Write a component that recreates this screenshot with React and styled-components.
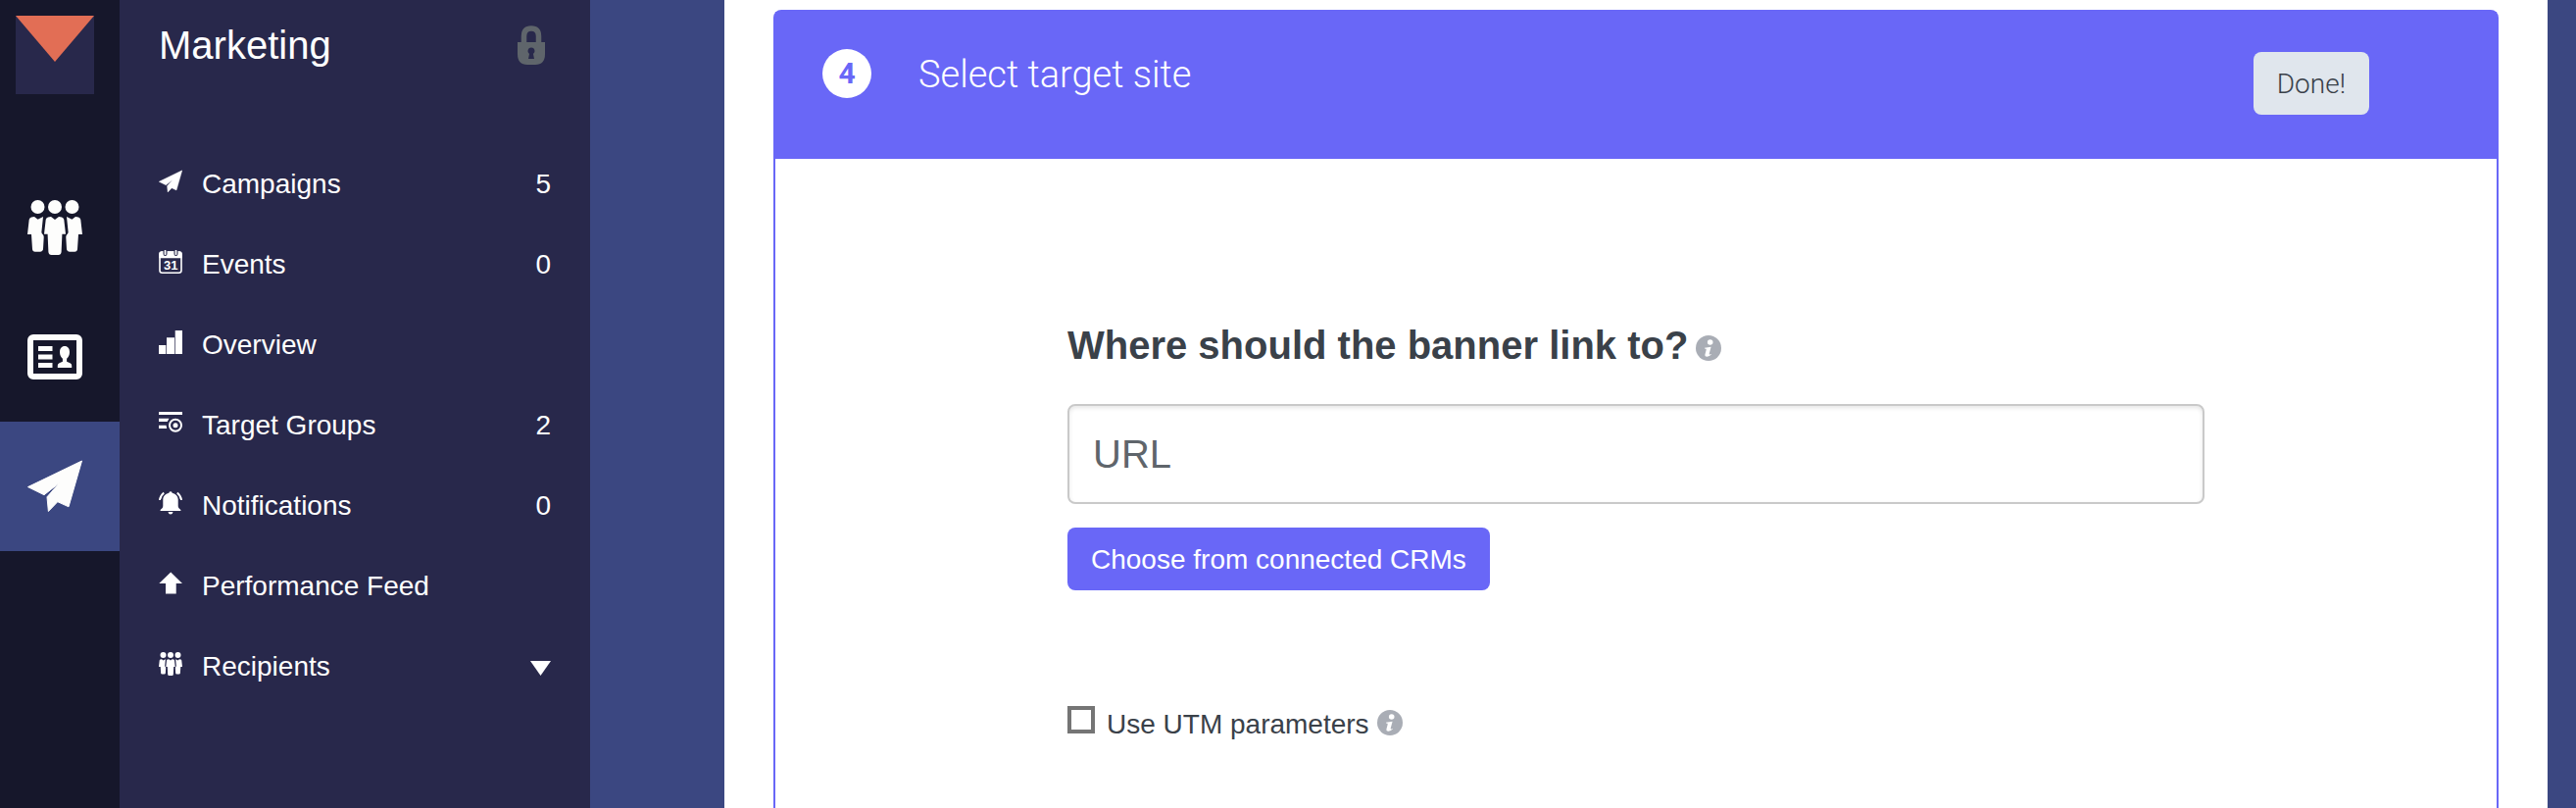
import React, { useState } from 'react';
import styled, { createGlobalStyle, css } from 'styled-components';

const colors = {
  rail: '#16172b',
  sidebar: '#28284b',
  accent: '#3b4781',
  primary: '#6967f7',
  coral: '#e26e55',
  text: '#3a4149',
  muted: '#5f656b',
  info: '#a9adb5',
  line: '#c9c9c9',
};

const GlobalStyle = createGlobalStyle`
  *, *::before, *::after { box-sizing: border-box; }
  body {
    margin: 0;
    background: ${colors.accent};
    font-family: "Liberation Sans", Arial, Helvetica, sans-serif;
    font-size: 28px;
    line-height: 32px;
    color: ${colors.text};
  }
`;

const Page = styled.div`
  display: flex;
  min-height: 100vh;
`;

const Rail = styled.nav`
  flex: 0 0 122px;
  background: ${colors.rail};
`;

const LogoLink = styled.a`
  display: block;
  padding: 16px 16px 70px;

  svg { display: block; }
`;

const RailLink = styled.a`
  display: flex;
  align-items: center;
  height: 132px;
  padding-left: 28px;
  color: #fdfdfc;
  background: ${({ $active }) => ($active ? colors.accent : 'transparent')};
`;

const Sidebar = styled.aside`
  flex: 0 0 480px;
  background: ${colors.sidebar};
  color: #fff;
`;

const SidebarHeader = styled.header`
  display: flex;
  align-items: center;
  justify-content: space-between;
  padding: 23px 46px 78px 40px;
`;

const SidebarTitle = styled.h1`
  margin: 0;
  font-size: 40px;
  font-weight: 400;
  line-height: 46px;
`;

const Menu = styled.ul`
  margin: 0;
  padding: 0;
  list-style: none;
`;

const menuRow = css`
  display: flex;
  align-items: baseline;
  gap: 20px;
  width: 100%;
  padding: 25px 40px;
  border: 0;
  background: none;
  color: inherit;
  font: inherit;
  text-align: left;
  text-decoration: none;
  cursor: pointer;
`;

const MenuLink = styled.a`${menuRow}`;
const MenuToggle = styled.button`${menuRow}`;
const MenuLabel = styled.span`flex: 1;`;

const Main = styled.main`
  display: flex;
  flex: 1;
  min-width: 0;
  margin: 0 29px 0 137px;
  padding: 10px 50px 0;
  background: #fff;
`;

const Card = styled.section`
  flex: 1;
  min-width: 0;
  border: 2px solid ${colors.primary};
  border-bottom: 0;
  border-radius: 8px 8px 0 0;
`;

const CardHeader = styled.header`
  display: flex;
  align-items: flex-start;
  justify-content: space-between;
  padding: 38px 130px 45px 48px;
  background: ${colors.primary};
  font-family: Roboto, "Liberation Sans", sans-serif;
`;

const StepHeading = styled.div`
  display: flex;
  align-items: flex-start;
  gap: 48px;
`;

const StepBadge = styled.span`
  display: grid;
  place-items: center;
  width: 50px;
  height: 50px;
  border-radius: 50%;
  background: #fff;
  color: ${colors.primary};
  font-size: 30px;
  font-weight: 700;
`;

const StepTitle = styled.h2`
  margin: 0;
  color: #fff;
  font-size: 38px;
  font-weight: 350;
  line-height: 52px;
`;

const Button = styled.button`
  height: 64px;
  padding: 2px 24px 0;
  border: 0;
  border-radius: 8px;
  background: ${colors.primary};
  color: #fff;
  font: inherit;
  cursor: pointer;
`;

const DoneButton = styled(Button)`
  margin-top: 3px;
  background: #e0e6ed;
  color: ${colors.text};
  font-weight: 300;
`;

const CardBody = styled.form`
  display: flex;
  flex-direction: column;
  align-items: flex-start;
  max-width: 1160px;
  margin: 0 auto;
  padding: 167px 0 64px;
`;

const LabelLine = styled.div`
  display: flex;
  align-items: baseline;
  gap: 8px;
`;

const Question = styled.label`
  font-size: 40px;
  font-weight: 700;
  line-height: 46px;
`;

const UrlInput = styled.input`
  width: 100%;
  height: 102px;
  margin: 37px 0 24px;
  padding: 0 24px;
  border: 2px solid ${colors.line};
  border-radius: 8px;
  background: #fff;
  box-shadow: inset 0 2px 4px rgba(0, 0, 0, 0.1);
  color: ${colors.text};
  font: inherit;
  font-size: 40px;

  &::placeholder { color: ${colors.muted}; opacity: 1; }
`;

const CheckLine = styled(LabelLine)`
  margin-top: 118px;
`;

const CheckLabel = styled.label`
  display: flex;
  align-items: baseline;
  gap: 12px;
`;

const Checkbox = styled.input`
  appearance: none;
  width: 28px;
  height: 28px;
  margin: 0;
  border: 4px solid #757575;
  background: #fff;

  &:checked { background: ${colors.primary}; }
`;

const InfoButton = styled.button`
  display: block;
  height: 26px;
  margin: 0;
  padding: 0;
  border: 0;
  background: none;
  color: ${colors.info};
  cursor: pointer;

  svg { display: block; margin-bottom: -3px; }
`;

const Svg = ({ w, h, box, children }) => (
  <svg width={w} height={h} viewBox={box || `0 0 ${w} ${h}`} fill="currentColor" aria-hidden="true">
    {children}
  </svg>
);

const Logo = () => (
  <Svg w={80} h={80}>
    <path fill={colors.sidebar} d="M0 0h80v80H0z" />
    <path fill={colors.coral} d="M0 0h80L40 47z" />
  </Svg>
);

const PeopleIcon = ({ size }) => (
  <Svg w={size} h={size} box="0 0 56 56">
    <circle cx="10.5" cy="7" r="7" />
    <circle cx="28" cy="7" r="7" />
    <circle cx="45.5" cy="7" r="7" />
    <path d="M21 17.4l3-.3 4 2.900 4-2.900 3 .3q2 .5 2.300 2.500L39 34.800h-3.600L34.600 53q-.4 3-3 3h-7.200q-2.600 0-3-3l-.8-18.200H17l1.700-14.900q.3-2 2.300-2.500z" />
    <path d="M4 17.400l3-.3 3.600 2.700L16 17l-1.600 15.500q-.1 1.600 1.200 2.600 1.200 1 1.100 3L16 50q-.4 2.700-2.800 2.700H7.800Q5.300 52.700 5 50L4 35H0l1.700-15.100Q2 17.900 4 17.400z" />
    <path d="M52 17.400l-3-.3-3.600 2.700L40 17l1.600 15.500q.1 1.600-1.200 2.600-1.200 1-1.100 3L40 50q.4 2.700 2.800 2.700h5.400q2.500 0 2.800-2.700l1-15h4l-1.700-15.100Q54 17.900 52 17.400z" />
  </Svg>
);

const PlaneIcon = ({ size }) => (
  <Svg w={size} h={size} box="0 0 56 56">
    <path
      d="M55.500 2L.5 28.600 17 36.700 32.500 24.500 20 38.800 21.400 53.500 30.800 43.700 42 48.800z"
      stroke="currentColor"
      strokeLinejoin="round"
    />
  </Svg>
);

const IdCardIcon = () => (
  <Svg w={56} h={46}>
    <rect x="3" y="3" width="50" height="40" rx="3" fill="none" stroke="currentColor" strokeWidth="6" />
    <path d="M11 12h14.500v5H11zM11 20.500h14.500v5H11zM11 29h14.500v5H11z" />
    <path d="M38 12c3.200 0 5 2.400 5 6 0 3.300-1.200 5.400-2.900 6.700v3.100l3.400 1.400q1.700.7 1.700 2.600V34H30.800v-2.200q0-1.900 1.700-2.600l3.400-1.400v-3.100C34.200 23.400 33 21.300 33 18c0-3.600 1.800-6 5-6z" />
  </Svg>
);

const CalendarIcon = () => (
  <Svg w={24} h={24}>
    <rect x="1" y="2" width="22" height="21.200" rx="2.500" fill="none" stroke="currentColor" strokeWidth="1.600" />
    <path d="M.3 8.200V4q0-2.800 2.800-2.800h17.800q2.800 0 2.800 2.800v4.200z" />
    <path d="M6.500 1v3M17.500 1v3" stroke={colors.sidebar} strokeWidth="4" strokeLinecap="round" />
    <path d="M6.500 .8v3.400M17.500 .8v3.400" stroke="currentColor" strokeWidth="1.800" strokeLinecap="round" />
    <text x="12.300" y="20.200" fontSize="13" fontWeight="700" textAnchor="middle">31</text>
  </Svg>
);

const BarsIcon = () => (
  <Svg w={24} h={24}><path d="M0 15h7.300v9H0zM8 7.300h8V24H8zM16.700 0H24v24h-7.300z" /></Svg>
);

const TargetIcon = () => (
  <Svg w={24} h={24}>
    <path d="M0 1h24v3H0zM0 7.800h10.500L8.700 11H0zM0 14.800h7.500l.7 3.200H0z" />
    <circle cx="17" cy="14.800" r="6" fill="none" stroke="currentColor" strokeWidth="2" />
    <circle cx="17" cy="14.800" r="2.500" />
  </Svg>
);

const BellIcon = () => (
  <Svg w={24} h={24}>
    <path d="M12 .3q1.300 0 1.700 1.400c3.800.8 6 3.500 6 7v6.500q0 2.400 2.700 3.700v1.100H1.600v-1.100q2.700-1.300 2.700-3.700V8.700c0-3.500 2.200-6.200 6-7Q10.700.3 12 .3zM9.500 20.900h5q-.5 2.500-2.500 2.500t-2.500-2.500z" />
    <path d="M5.200 1.500Q1.500 4.500 1 9M18.800 1.500Q22.500 4.500 23 9" fill="none" stroke="currentColor" strokeWidth="2" />
  </Svg>
);

const ArrowIcon = () => (
  <Svg w={24} h={24}><path d="M12.200 .5L24 12h-6.300v10.600H7V12H.3z" /></Svg>
);

const LockIcon = () => (
  <svg width="28" height="40" viewBox="0 0 28 40" role="img" aria-label="Locked">
    <path d="M6.500 18V11Q6.500 3 14 3t7.500 8v7" fill="none" stroke={colors.muted} strokeWidth="5.500" />
    <path
      fill={colors.muted}
      fillRule="evenodd"
      d="M0 17h28v12q0 11-10 11h-8Q0 40 0 29zM14 22.500a3.500 3.500 0 0 0-2 6.400L11 34h6l-1-5.100a3.500 3.500 0 0 0-2-6.400z"
    />
  </svg>
);

const CaretIcon = () => <Svg w={21} h={15}><path d="M0 0h21L10.500 15z" /></Svg>;

const InfoIcon = () => (
  <Svg w={26} h={26}>
    <circle cx="13" cy="13" r="13" />
    <circle cx="14.700" cy="7" r="2.800" fill="#fff" />
    <path
      d="M9 12.800l6.600-1.100-1.900 7.100q-.4 1.500 1.900.2l.3.600q-2 2.100-4.300 2.100-2.700 0-2.100-2.500l1.200-4.400q.4-1.500-1.700-1.400z"
      fill="#fff"
    />
  </Svg>
);

const railItems = [
  { label: 'Contacts', icon: <PeopleIcon size={56} /> },
  { label: 'Profiles', icon: <IdCardIcon /> },
  { label: 'Marketing', icon: <PlaneIcon size={56} />, active: true },
];

const menuItems = [
  { label: 'Campaigns', icon: <PlaneIcon size={24} />, count: 5 },
  { label: 'Events', icon: <CalendarIcon />, count: 0 },
  { label: 'Overview', icon: <BarsIcon /> },
  { label: 'Target Groups', icon: <TargetIcon />, count: 2 },
  { label: 'Notifications', icon: <BellIcon />, count: 0 },
  { label: 'Performance Feed', icon: <ArrowIcon /> },
];

export default function App() {
  const [open, setOpen] = useState(false);

  return (
    <>
      <GlobalStyle />
      <Page>
        <Rail aria-label="Sections">
          <LogoLink href="#home" aria-label="Home"><Logo /></LogoLink>
          {railItems.map(({ label, icon, active }) => (
            <RailLink key={label} href={`#${label}`} aria-label={label} $active={active}>{icon}</RailLink>
          ))}
        </Rail>

        <Sidebar>
          <SidebarHeader>
            <SidebarTitle>Marketing</SidebarTitle>
            <LockIcon />
          </SidebarHeader>
          <Menu>
            {menuItems.map(({ label, icon, count }) => (
              <li key={label}>
                <MenuLink href={`#${label}`}>
                  {icon}
                  <MenuLabel>{label}</MenuLabel>
                  {count !== undefined && <span>{count}</span>}
                </MenuLink>
              </li>
            ))}
            <li>
              <MenuToggle type="button" aria-expanded={open} onClick={() => setOpen(!open)}>
                <PeopleIcon size={24} />
                <MenuLabel>Recipients</MenuLabel>
                <CaretIcon />
              </MenuToggle>
            </li>
          </Menu>
        </Sidebar>

        <Main>
          <Card>
            <CardHeader>
              <StepHeading>
                <StepBadge>4</StepBadge>
                <StepTitle>Select target site</StepTitle>
              </StepHeading>
              <DoneButton type="submit" form="target-site">Done!</DoneButton>
            </CardHeader>
            <CardBody id="target-site" onSubmit={(event) => event.preventDefault()}>
              <LabelLine>
                <Question htmlFor="banner-url">Where should the banner link to?</Question>
                <InfoButton type="button" aria-label="About the banner link"><InfoIcon /></InfoButton>
              </LabelLine>
              <UrlInput id="banner-url" type="text" placeholder="URL" />
              <Button type="button">Choose from connected CRMs</Button>
              <CheckLine>
                <CheckLabel htmlFor="utm">
                  <Checkbox id="utm" type="checkbox" />
                  Use UTM parameters
                </CheckLabel>
                <InfoButton type="button" aria-label="About UTM parameters"><InfoIcon /></InfoButton>
              </CheckLine>
            </CardBody>
          </Card>
        </Main>
      </Page>
    </>
  );
}
